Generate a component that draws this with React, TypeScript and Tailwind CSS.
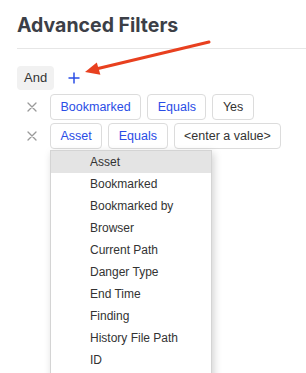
import React from "react";

const items = [
  "Asset",
  "Bookmarked",
  "Bookmarked by",
  "Browser",
  "Current Path",
  "Danger Type",
  "End Time",
  "Finding",
  "History File Path",
  "ID",
];

function XIcon() {
  return (
    <svg width="10" height="10" viewBox="0 0 10 10" className="shrink-0">
      <path d="M1 1L9 9M9 1L1 9" stroke="#9a9a9a" strokeWidth="1.3" strokeLinecap="round" />
    </svg>
  );
}

function Chip({ children, blue = true }: { children: React.ReactNode; blue?: boolean }) {
  return (
    <div
      className={`h-[26px] px-[9.5px] flex items-center border border-[#dcdcdc] rounded-[4px] bg-white text-[12.5px] whitespace-nowrap ${
        blue ? "text-[#2a4de6]" : "text-[#333333]"
      }`}
    >
      {children}
    </div>
  );
}

export default function App() {
  return (
    <div
      className="relative w-[306px] h-[373px] overflow-hidden bg-white"
      style={{ fontFamily: '"Liberation Sans", Arial, sans-serif' }}
    >
      <div className="pl-[17px]">
        <h1
          className="pt-[11px] text-[19.5px] leading-[28px] font-bold text-[#3c3f47] mb-[9px]"
          style={{ fontFamily: "Inter, sans-serif" }}
        >
          Advanced Filters
        </h1>
        <div className="h-px bg-[#e6e6e6]" />

        <div className="mt-[17px] flex items-center">
          <div className="h-[24px] px-[7px] flex items-center rounded-[4px] bg-[#f1f1f1] text-[13px] text-[#333333]">
            And
          </div>
          <svg width="12" height="12" viewBox="0 0 12 12" className="ml-[14px]">
            <path d="M6 0.5V11.5M0.5 6H11.5" stroke="#2a4de6" strokeWidth="1.5" />
          </svg>
        </div>

        <div className="mt-[4px] flex flex-col gap-[3px]">
          <div className="flex items-center">
            <div className="w-[33px] flex pl-[10px]">
              <XIcon />
            </div>
            <div className="flex gap-[6px]">
              <Chip>Bookmarked</Chip>
              <Chip>Equals</Chip>
              <Chip blue={false}>Yes</Chip>
            </div>
          </div>
          <div className="flex items-center">
            <div className="w-[33px] flex pl-[10px]">
              <XIcon />
            </div>
            <div className="relative flex gap-[6px]">
              <Chip>Asset</Chip>
              <Chip>Equals</Chip>
              <Chip blue={false}>&lt;enter a value&gt;</Chip>
              <div className="absolute left-0 top-[27px] w-[162px] h-[240px] bg-white border border-[#d4d4d4] shadow-[2px_3px_8px_rgba(0,0,0,0.18)] z-10">
                {items.map((it, i) => (
                  <div
                    key={it}
                    className={`h-[22px] pl-[39px] flex items-center text-[12px] text-[#333333] ${
                      i === 0 ? "bg-[#e4e4e4]" : ""
                    }`}
                  >
                    {it}
                  </div>
                ))}
              </div>
            </div>
          </div>
        </div>
      </div>

      <svg className="absolute left-0 top-0 pointer-events-none" width="306" height="373">
        <line x1="209" y1="42" x2="97" y2="68.8" stroke="#e8401f" strokeWidth="3" strokeLinecap="round" />
        <polygon points="85,72 100.4,74.8 96.8,62.6" fill="#e8401f" />
      </svg>
    </div>
  );
}
